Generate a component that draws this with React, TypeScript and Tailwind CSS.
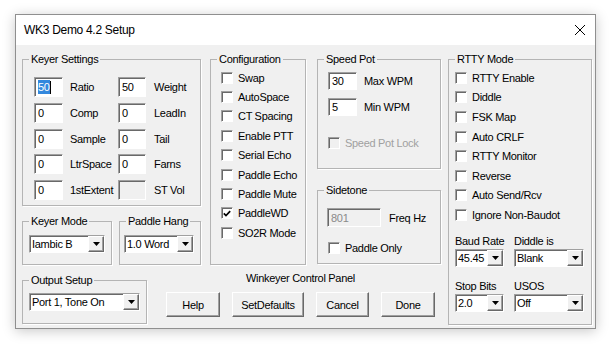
import React from 'react'

const sunken =
  'border border-t-[#a0a0a0] border-l-[#a0a0a0] border-r-white border-b-white shadow-[inset_1px_1px_0_#696969]'
const raised =
  'border border-t-white border-l-white border-r-[#696969] border-b-[#696969] shadow-[inset_-1px_-1px_0_#a0a0a0]'

function Group({ title, className, children }: { title: string; className: string; children?: React.ReactNode }) {
  return (
    <fieldset className={`border border-[#b4b4b4] shadow-[1px_1px_0_#fff] ${className}`}>
      <legend className="ml-[6px] px-[2px] leading-[14px]">{title}</legend>
      {children}
    </fieldset>
  )
}

function Edit({
  value,
  className,
  disabled,
  selected,
}: {
  value: string
  className: string
  disabled?: boolean
  selected?: boolean
}) {
  return (
    <div
      className={`flex items-center pl-[3px] ${sunken} ${disabled ? 'bg-[#f0f0f0] text-[#8a8a8a]' : 'bg-white'} ${className}`}
    >
      {selected ? (
        <>
          <span className="bg-[#3388dd] text-white">{value}</span>
          <span className="w-px h-[13px] bg-black" />
        </>
      ) : (
        value
      )}
    </div>
  )
}

function Combo({ value, className }: { value: string; className: string }) {
  return (
    <div className={`flex h-[18px] bg-white ${sunken} ${className}`}>
      <span className="flex-1 flex items-center pl-[2px] whitespace-nowrap">{value}</span>
      <span className={`w-[16px] h-full flex items-center justify-center bg-[#f0f0f0] ${raised}`}>
        <svg width="7" height="4" viewBox="0 0 7 4">
          <path d="M0 0h7L3.5 4z" fill="#000" />
        </svg>
      </span>
    </div>
  )
}

function Check({ label, checked, disabled }: { label: string; checked?: boolean; disabled?: boolean }) {
  return (
    <div className="flex items-center h-full">
      <span
        className={`w-[12px] h-[12px] flex items-center justify-center ${sunken} ${disabled ? 'bg-[#f0f0f0]' : 'bg-white'}`}
      >
        {checked && (
          <svg width="8" height="7" viewBox="0 0 8 7">
            <path d="M0.8 3.3 L3 5.5 L7.2 1.2" stroke="#000" strokeWidth="1.7" fill="none" />
          </svg>
        )}
      </span>
      <span className={`ml-[5px] whitespace-nowrap ${disabled ? 'text-[#a0a0a0]' : ''}`}>{label}</span>
    </div>
  )
}

function Btn({ label, className }: { label: string; className: string }) {
  return (
    <button className={`h-[25px] bg-[#f0f0f0] flex items-center justify-center ${raised} ${className}`}>{label}</button>
  )
}

const keyerRows = [
  ['50', 'Ratio', '50', 'Weight'],
  ['0', 'Comp', '0', 'LeadIn'],
  ['0', 'Sample', '0', 'Tail'],
  ['0', 'LtrSpace', '0', 'Farns'],
  ['0', '1stExtent', '', 'ST Vol'],
]

const configItems = [
  'Swap',
  'AutoSpace',
  'CT Spacing',
  'Enable PTT',
  'Serial Echo',
  'Paddle Echo',
  'Paddle Mute',
  'PaddleWD',
  'SO2R Mode',
]

const rttyItems = [
  'RTTY Enable',
  'Diddle',
  'FSK Map',
  'Auto CRLF',
  'RTTY Monitor',
  'Reverse',
  'Auto Send/Rcv',
  'Ignore Non-Baudot',
]

export default function App() {
  return (
    <div className="w-[610px] h-[346px] bg-white pt-[14px] pl-[15px] font-['Liberation_Sans',Arial,sans-serif] text-[11px] leading-[14px] tracking-[-0.3px] text-black">
      <div className="w-[581px] h-[315px] flex flex-col border border-[#8f8f8f] bg-[#f0f0f0] shadow-[0_2px_12px_rgba(0,0,0,0.22)]">
        {/* title bar */}
        <div className="h-[30px] bg-white flex items-center justify-between pl-[8px] pr-[10px]">
          <span className="text-[12px]">WK3 Demo 4.2 Setup</span>
          <svg width="10" height="10" viewBox="0 0 10 10">
            <path d="M0 0L10 10M10 0L0 10" stroke="#000" strokeWidth="1" />
          </svg>
        </div>

        <div className="flex-1 flex pt-[7px] pl-[6px]">
          <div className="w-[419px] flex flex-col">
            <div className="flex items-start">
              {/* keyer column */}
              <div className="w-[179px] flex flex-col gap-[8px]">
                <Group title="Keyer Settings" className="h-[154px]">
                  <div className="pt-[11px] pl-[11px] flex flex-col gap-[5.75px]">
                    {keyerRows.map((r, i) => (
                      <div key={i} className="flex items-center h-[20px]">
                        <Edit value={r[0]} className="w-[29px] h-[20px]" selected={i === 0} />
                        <span className="ml-[7px] w-[48px] whitespace-nowrap">{r[1]}</span>
                        <Edit value={r[2]} className="w-[28px] h-[20px]" disabled={i === 4} />
                        <span className="ml-[8px] whitespace-nowrap">{r[3]}</span>
                      </div>
                    ))}
                  </div>
                </Group>
                <div className="flex gap-[7px]">
                  <Group title="Keyer Mode" className="w-[90px] h-[51px]">
                    <div className="pt-[7px] pl-[6px]">
                      <Combo value="Iambic B" className="w-[76px]" />
                    </div>
                  </Group>
                  <Group title="Paddle Hang" className="w-[82px] h-[51px]">
                    <div className="pt-[7px] pl-[4px]">
                      <Combo value="1.0 Word" className="w-[70px]" />
                    </div>
                  </Group>
                </div>
              </div>

              {/* configuration */}
              <Group title="Configuration" className="ml-[9px] w-[96px] h-[213px]">
                <div className="pt-[2px] pl-[10px] flex flex-col">
                  {configItems.map((c) => (
                    <div key={c} className="h-[19.4px]">
                      <Check label={c} checked={c === 'PaddleWD'} />
                    </div>
                  ))}
                </div>
              </Group>

              {/* speed pot / sidetone */}
              <div className="ml-[11px] w-[124px] flex flex-col gap-[14px]">
                <Group title="Speed Pot" className="h-[117px]">
                  <div className="pt-[6px] pl-[10px] flex flex-col">
                    <div className="flex items-center">
                      <Edit value="30" className="w-[29px] h-[18px]" />
                      <span className="ml-[7px]">Max WPM</span>
                    </div>
                    <div className="flex items-center mt-[8px]">
                      <Edit value="5" className="w-[29px] h-[18px]" />
                      <span className="ml-[7px]">Min WPM</span>
                    </div>
                    <div className="h-[14px] mt-[20px]">
                      <Check label="Speed Pot Lock" disabled />
                    </div>
                  </div>
                </Group>
                <Group title="Sidetone" className="h-[81px]">
                  <div className="pt-[11px] pl-[9px] flex flex-col">
                    <div className="flex items-center">
                      <Edit value="801" className="w-[54px] h-[19px]" disabled />
                      <span className="ml-[8px]">Freq Hz</span>
                    </div>
                    <div className="h-[14px] mt-[14px] pl-[1px]">
                      <Check label="Paddle Only" />
                    </div>
                  </div>
                </Group>
              </div>
            </div>

            {/* bottom row */}
            <div className="flex items-start mt-[6px]">
              <Group title="Output Setup" className="mt-[2px] w-[125px] h-[51px]">
                <div className="pt-[6px] pl-[6px]">
                  <Combo value="Port 1, Tone On" className="w-[111px]" />
                </div>
              </Group>
              <div className="ml-[19px] flex flex-col items-center">
                <span>Winkeyer Control Panel</span>
                <div className="flex gap-[12px] mt-[7px]">
                  <Btn label="Help" className="w-[54px]" />
                  <Btn label="SetDefaults" className="w-[72px]" />
                  <Btn label="Cancel" className="w-[53px]" />
                  <Btn label="Done" className="w-[54px]" />
                </div>
              </div>
            </div>
          </div>

          {/* RTTY */}
          <Group title="RTTY Mode" className="ml-[7px] w-[144px] h-[273px]">
            <div className="pt-[2px] pl-[6px] flex flex-col">
              {rttyItems.map((c) => (
                <div key={c} className="h-[19.6px]">
                  <Check label={c} />
                </div>
              ))}
              <div className="grid grid-cols-[49px_70px] gap-x-[10px] mt-[9px] whitespace-nowrap">
                <span>Baud Rate</span>
                <span>Diddle is</span>
                <Combo value="45.45" className="mt-px w-[49px]" />
                <Combo value="Blank" className="mt-px w-[70px]" />
                <span className="mt-[12px]">Stop Bits</span>
                <span className="mt-[12px]">USOS</span>
                <Combo value="2.0" className="mt-px w-[49px]" />
                <Combo value="Off" className="mt-px w-[70px]" />
              </div>
            </div>
          </Group>
        </div>
      </div>
    </div>
  )
}
